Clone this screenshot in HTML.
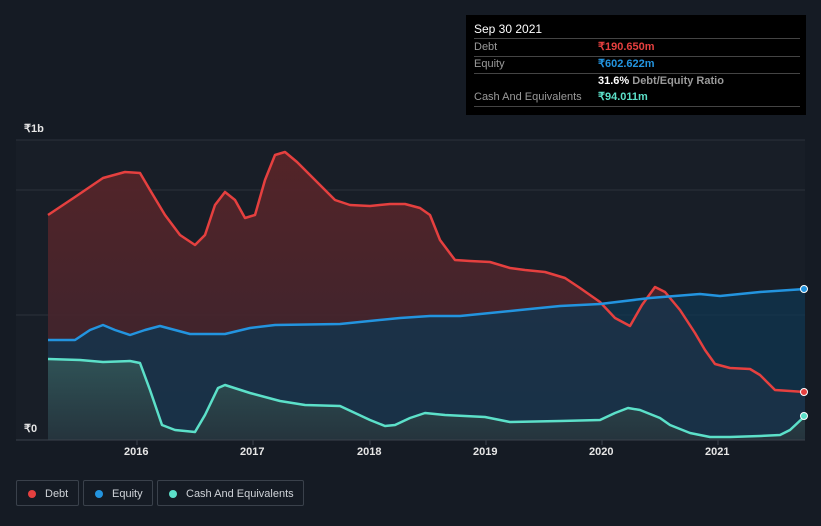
<!DOCTYPE html>
<html><head><meta charset="utf-8"><style>
body{margin:0;width:821px;height:526px;background:#151b24;font-family:"Liberation Sans",sans-serif;overflow:hidden;position:relative}
.tt{position:absolute;left:466px;top:15px;width:340px;height:100px;background:#000;color:#fff;font-size:11px}
.tt .r{position:absolute;left:8px;right:6px;border-bottom:1px solid #444;height:17px;line-height:17px}
.tt .l{color:#9a9a9a}
.tt .v{position:absolute;left:124px;top:0;font-weight:bold}
.leg{position:absolute;top:480px;height:26px;border:1px solid #3a414b;border-radius:2px;color:#cfd3d8;font-size:11px;line-height:26px;box-sizing:border-box}
.leg i{position:absolute;left:11px;top:9px;width:8px;height:8px;border-radius:50%}
.leg span{position:absolute;left:28px}
.ax{position:absolute;color:#e6e6e6;font-size:11px;font-weight:bold}
</style></head><body>
<svg width="821" height="526" style="position:absolute;left:0;top:0">
<defs>
<linearGradient id="gd" x1="0" y1="0" x2="0" y2="1"><stop offset="0" stop-color="#5a2428"/><stop offset="1" stop-color="#3a2530"/></linearGradient>
<linearGradient id="gc" x1="0" y1="0" x2="0" y2="1"><stop offset="0" stop-color="#2f5256"/><stop offset="1" stop-color="#25343d"/></linearGradient>
</defs>
<rect x="16" y="140" width="789" height="300" fill="#181e27"/>
<line x1="16" y1="140" x2="805" y2="140" stroke="#2c323b"/>
<line x1="16" y1="190" x2="805" y2="190" stroke="#2c323b"/>
<line x1="16" y1="315" x2="805" y2="315" stroke="#2c323b"/>
<path fill="url(#gd)" opacity="0.9" d="M48,215 L75,197 L103,178 L125,172 L140,173 L150,190 L165,215 L180,235 L195,245 L205,235 L215,205 L225,192 L235,200 L245,218 L255,215 L265,180 L275,155 L285,152 L297,162 L315,180 L335,200 L350,205 L370,206 L390,204 L405,204 L420,208 L430,215 L440,240 L455,260 L470,261 L490,262 L510,268 L525,270 L545,272 L565,278 L580,288 L600,302 L615,318 L630,326 L642,305 L655,287 L665,292 L680,310 L695,333 L705,350 L715,364 L730,368 L750,369 L760,375 L775,390 L805,392 L805,440 L48,440Z"/>
<path fill="#0f3550" opacity="0.75" d="M48,340 L75,340 L90,330 L103,325 L115,330 L130,335 L145,330 L160,326 L175,330 L190,334 L225,334 L250,328 L275,325 L340,324 L400,318 L430,316 L460,316 L520,310 L560,306 L600,304 L650,298 L700,294 L720,296 L760,292 L805,289 L805,440 L48,440Z"/>
<path fill="url(#gc)" d="M48,359 L80,360 L103,362 L130,361 L140,363 L150,390 L162,425 L175,430 L195,432 L205,415 L218,388 L225,385 L250,393 L280,401 L305,405 L340,406 L355,413 L370,420 L385,426 L395,425 L410,418 L425,413 L445,415 L485,417 L510,422 L560,421 L600,420 L615,413 L628,408 L640,410 L660,418 L670,425 L690,433 L710,437 L730,437 L760,436 L780,435 L790,430 L805,416 L805,440 L48,440Z"/>
<g fill="none" stroke-width="2.5" stroke-linejoin="round">
<path stroke="#e5403f" d="M48,215 L75,197 L103,178 L125,172 L140,173 L150,190 L165,215 L180,235 L195,245 L205,235 L215,205 L225,192 L235,200 L245,218 L255,215 L265,180 L275,155 L285,152 L297,162 L315,180 L335,200 L350,205 L370,206 L390,204 L405,204 L420,208 L430,215 L440,240 L455,260 L470,261 L490,262 L510,268 L525,270 L545,272 L565,278 L580,288 L600,302 L615,318 L630,326 L642,305 L655,287 L665,292 L680,310 L695,333 L705,350 L715,364 L730,368 L750,369 L760,375 L775,390 L805,392"/>
<path stroke="#2394df" d="M48,340 L75,340 L90,330 L103,325 L115,330 L130,335 L145,330 L160,326 L175,330 L190,334 L225,334 L250,328 L275,325 L340,324 L400,318 L430,316 L460,316 L520,310 L560,306 L600,304 L650,298 L700,294 L720,296 L760,292 L805,289"/>
<path stroke="#5ce0c9" d="M48,359 L80,360 L103,362 L130,361 L140,363 L150,390 L162,425 L175,430 L195,432 L205,415 L218,388 L225,385 L250,393 L280,401 L305,405 L340,406 L355,413 L370,420 L385,426 L395,425 L410,418 L425,413 L445,415 L485,417 L510,422 L560,421 L600,420 L615,413 L628,408 L640,410 L660,418 L670,425 L690,433 L710,437 L730,437 L760,436 L780,435 L790,430 L805,416"/>
</g>
<circle cx="804" cy="392" r="3.5" fill="#e5403f" stroke="#fff" stroke-width="1"/>
<circle cx="804" cy="289" r="3.5" fill="#2394df" stroke="#fff" stroke-width="1"/>
<circle cx="804" cy="416" r="3.5" fill="#5ce0c9" stroke="#fff" stroke-width="1"/>
<line x1="16" y1="440" x2="805" y2="440" stroke="#3a414b"/>
<g stroke="#3a414b"><line x1="137" y1="440" x2="137" y2="445"/><line x1="253" y1="440" x2="253" y2="445"/><line x1="370" y1="440" x2="370" y2="445"/><line x1="486" y1="440" x2="486" y2="445"/><line x1="602" y1="440" x2="602" y2="445"/><line x1="718" y1="440" x2="718" y2="445"/></g>
</svg>
<div class="ax" style="left:24px;top:122px">₹1b</div>
<div class="ax" style="left:24px;top:422px">₹0</div>
<div class="ax" style="left:124px;top:446px">2016</div>
<div class="ax" style="left:240px;top:446px">2017</div>
<div class="ax" style="left:357px;top:446px">2018</div>
<div class="ax" style="left:473px;top:446px">2019</div>
<div class="ax" style="left:589px;top:446px">2020</div>
<div class="ax" style="left:705px;top:446px">2021</div>
<div class="tt">
<div class="r" style="top:6px;font-size:12px">Sep 30 2021</div>
<div class="r l" style="top:24px">Debt<span class="v" style="color:#e5403f">₹190.650m</span></div>
<div class="r l" style="top:41px">Equity<span class="v" style="color:#2394df">₹602.622m</span></div>
<div class="r" style="top:58px;border:none"><span class="v" style="color:#fff">31.6% <span style="color:#9a9a9a">Debt/Equity Ratio</span></span></div>
<div class="r l" style="top:74px">Cash And Equivalents<span class="v" style="color:#5ce0c9">₹94.011m</span></div>
</div>
<div class="leg" style="left:16px;width:63px"><i style="background:#e5403f"></i><span>Debt</span></div>
<div class="leg" style="left:83px;width:70px"><i style="background:#2394df"></i><span>Equity</span></div>
<div class="leg" style="left:157px;width:147px"><i style="background:#5ce0c9"></i><span>Cash And Equivalents</span></div>
</body></html>
